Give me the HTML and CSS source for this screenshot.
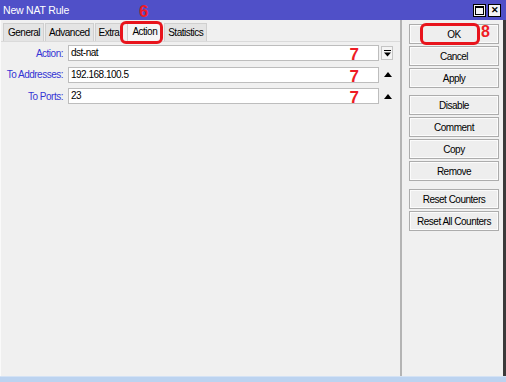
FILE: index.html
```html
<!DOCTYPE html>
<html lang="en">
<head>
  <meta charset="UTF-8">
  <title>New NAT Rule</title>
  <link rel="stylesheet" href="styles.css">
</head>
<body>
  <div class="window">
    <div class="titlebar">
      <span class="title">New NAT Rule</span>
      <span class="winbtn"><span class="restore"></span></span>
      <span class="winbtn close">&#x2715;</span>
    </div>

    <div class="main">
      <div class="left">
        <div class="tabs">
          <div class="tab">General</div>
          <div class="tab">Advanced</div>
          <div class="tab">Extra</div>
          <div class="tab active">Action</div>
          <div class="tab">Statistics</div>
        </div>

        <div class="form">
          <div class="row">
            <label class="label">Action:</label>
            <div class="input">dst-nat<span class="mark seven">7</span></div>
            <span class="dropbtn">
              <svg width="7" height="7" viewBox="0 0 7 7"><rect x="0" y="0" width="7" height="1" fill="#000"/><path d="M0 2.5 H7 L3.5 6.5 Z" fill="#000"/></svg>
            </span>
          </div>
          <div class="row">
            <label class="label">To Addresses:</label>
            <div class="input">192.168.100.5<span class="mark seven">7</span></div>
            <span class="updown"><svg width="8" height="5" viewBox="0 0 8 5"><path d="M0 5 L4 0 L8 5 Z" fill="#000"/></svg></span>
          </div>
          <div class="row">
            <label class="label">To Ports:</label>
            <div class="input">23<span class="mark seven">7</span></div>
            <span class="updown"><svg width="8" height="5" viewBox="0 0 8 5"><path d="M0 5 L4 0 L8 5 Z" fill="#000"/></svg></span>
          </div>
        </div>
      </div>

      <div class="right">
        <div class="btn">OK</div>
        <div class="btn">Cancel</div>
        <div class="btn">Apply</div>
        <div class="btn group">Disable</div>
        <div class="btn">Comment</div>
        <div class="btn">Copy</div>
        <div class="btn">Remove</div>
        <div class="btn group2">Reset Counters</div>
        <div class="btn">Reset All Counters</div>
      </div>
    </div>

    <div class="bottom"></div>

    <!-- red annotations drawn over the dialog -->
    <span class="mark six">6</span>
    <span class="ring ring-tab"></span>
    <span class="ring ring-ok"></span>
    <span class="mark eight">8</span>
  </div>
</body>
</html>
```

FILE: styles.css
```css
body {
  margin: 0;
  font-family: "Liberation Sans", Arial, sans-serif;
  font-size: 10px;
  letter-spacing: -0.5px;
  color: #000;
}
.window {
  position: relative;
  width: 506px;
  height: 382px;
  display: flex;
  flex-direction: column;
  background: #f0f0f0;
  overflow: hidden;
}
.titlebar {
  height: 20px;
  flex: none;
  display: flex;
  align-items: center;
  gap: 2px;
  padding: 0 5px 0 3px;
  background: #5050c8;
  color: #fff;
}
.title {
  flex: 1;
  font-size: 10.5px;
  letter-spacing: -0.2px;
}
.winbtn {
  width: 11px;
  height: 11px;
  border: 1px solid #000;
  background: #f4f4f4;
  color: #000;
  display: flex;
  align-items: center;
  justify-content: center;
  font-size: 9px;
  font-weight: bold;
  line-height: 1;
  letter-spacing: 0;
}
.restore {
  width: 7px;
  height: 6px;
  border: 1px solid #000;
  border-top-width: 2px;
}
.main {
  flex: 1;
  display: flex;
  border-left: 1px solid #fafafa;
  border-right: 3px solid #3a3a3a;
}
.left {
  width: 399px;
  border-right: 2px solid #b4b4b4;
}
.tabs {
  display: flex;
  box-sizing: border-box;
  height: 22px;
  padding: 3px 0 0 2px;
  border-bottom: 1px solid #dadada;
}
.tab {
  height: 18px;
  box-sizing: border-box;
  padding: 3px 3px 0;
  margin-right: 1px;
  border: 1px solid #cfcfcf;
  border-bottom: none;
  background: #e4e4e4;
}
.tab:first-child {
  padding: 3px 3px 0 4px;
}
.tab.active {
  background: #f6f6f6;
  margin: -1px 2px 0 3px;
  height: 19px;
  padding: 3px 4px 0;
}
.form {
  display: flex;
  flex-direction: column;
  gap: 5.5px;
  padding: 3px 0 0;
}
.row {
  display: flex;
  align-items: center;
  height: 16px;
}
.label {
  width: 62px;
  padding-right: 5px;
  text-align: right;
  color: #3434d4;
}
.input {
  position: relative;
  width: 311px;
  height: 16px;
  box-sizing: border-box;
  padding: 1px 2px;
  border: 1px solid #bdbdbd;
  background: #fff;
}
.dropbtn {
  width: 12px;
  height: 14px;
  margin-left: 2px;
  box-sizing: border-box;
  border: 1px solid #c4c4c4;
  background: #f4f4f4;
  display: flex;
  align-items: center;
  justify-content: center;
}
.updown {
  width: 12px;
  margin-left: 3px;
  display: flex;
  justify-content: center;
}
.right {
  flex: 1;
  display: flex;
  flex-direction: column;
  gap: 2px;
  padding: 4px 4px 0 7px;
}
.btn {
  height: 20px;
  box-sizing: border-box;
  border: 1px solid #acacac;
  box-shadow: inset 0 0 0 1px #fbfbfb;
  background: #eeeeee;
  display: flex;
  align-items: center;
  justify-content: center;
  white-space: nowrap;
}
.btn.group {
  margin-top: 5px;
}
.btn.group2 {
  margin-top: 6px;
}
.bottom {
  height: 5px;
  flex: none;
  background: #bcd3f0;
  border-top: 1px solid #d4e2f4;
}
.mark {
  position: absolute;
  color: #ee1c24;
  font-weight: bold;
  line-height: 1;
  letter-spacing: 0;
}
.seven {
  font-size: 17px;
  right: 19px;
  top: 0;
}
.six {
  font-size: 17px;
  left: 139px;
  top: 3px;
}
.eight {
  font-size: 16px;
  left: 481px;
  top: 24px;
}
.ring {
  position: absolute;
  border: 3px solid #e8141c;
  border-radius: 6px;
  box-sizing: border-box;
}
.ring-tab {
  left: 120px;
  top: 21px;
  width: 43px;
  height: 23px;
}
.ring-ok {
  left: 420px;
  top: 23px;
  width: 60px;
  height: 22px;
}
```
